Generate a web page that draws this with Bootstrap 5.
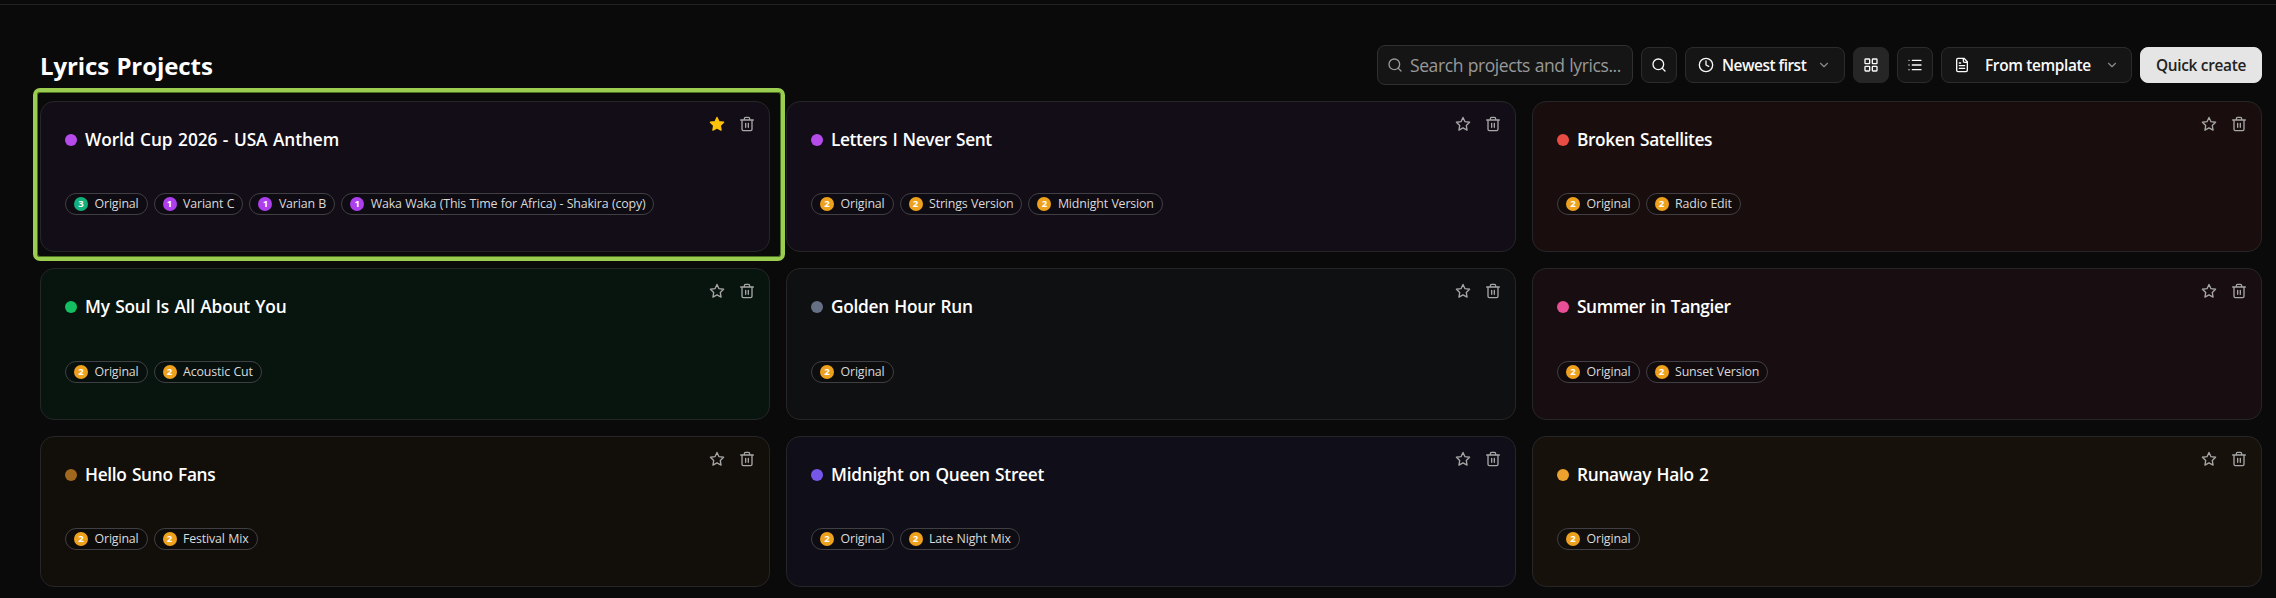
<!DOCTYPE html>
<html lang="en" data-bs-theme="dark">
<head>
<meta charset="utf-8">
<meta name="viewport" content="width=device-width, initial-scale=1">
<title>Lyrics Projects</title>
<link href="https://cdn.jsdelivr.net/npm/bootstrap@5.3.0/dist/css/bootstrap.min.css" rel="stylesheet">
<style>
  body { background: #0a0a0a; color: #fafafa; font-family: "Open Sans", "Noto Sans", sans-serif; height: 598px; overflow: hidden; }
  .topline { height: 5px; border-bottom: 1px solid #222; }
  .page { padding: 40px 14px 0 40px; }
  .toolbar-row { height: 40px; margin-bottom: 15.7px; }
  h1 { font-size: 24px; font-weight: 700; letter-spacing: -.08px; word-spacing: 1px; line-height: 32px; padding-top: 2px; }
  svg { fill: none; stroke: currentColor; stroke-width: 2; stroke-linecap: round; stroke-linejoin: round; flex: none; }
  .searchbox { width: 256px; height: 40px; background: #151515; border: 1px solid #303030; border-radius: 8px; padding-left: 9px; color: #999; font-size: 17.5px; white-space: nowrap; }
  .searchbox svg { margin-right: 7px; }
  .searchbox span { letter-spacing: -.4px; word-spacing: .5px; width: 211px; overflow: hidden; padding-top: 1px; }
  .tool { height: 36px; background: #151515; border: 1px solid #2c2c2c; border-radius: 8px; color: #fafafa; font-size: 15.4px; font-weight: 600; padding: 0; line-height: 20px; white-space: nowrap; letter-spacing: -.35px; }
  .tool span { padding-top: 1px; }
  .tool-sq { width: 36px; }
  .tool-on { background: #262626; border-color: #262626; }
  .tool-sort { width: 160px; padding: 0 13px 0 12px; letter-spacing: -.48px; }
  .tool-template { width: 191px; padding: 0 12px; }
  .tool-template span { margin-left: 15px; }
  .tool-create { width: 122px; background: #e5e5e5; border-color: #e5e5e5; color: #222; padding-top: 1px; letter-spacing: -.3px; }
  .tool .chev { color: #8a8a8a; }
  .projects { display: grid; grid-template-columns: repeat(3, 730px); grid-auto-rows: 151.5px; gap: 16px; }
  .project { background: var(--tint); border: 1px solid #262528; border-radius: 14px; padding: 25px 24px 0; position: relative; }
  .project h2 { font-size: 17.3px; font-weight: 600; line-height: 26px; letter-spacing: calc(-.36px + var(--track)); word-spacing: 1.2px; margin: 0; white-space: nowrap; }
  .dot { width: 12px; height: 12px; border-radius: 50%; background: var(--dot); margin-right: 8px; }
  .actions { position: absolute; top: 14px; right: 14px; gap: 14px; color: #a6a6a6; }
  .actions .fav { color: #fdc20c; fill: #fdc20c; }
  .chips { margin-top: 40.6px; gap: 6px; }
  .chip { height: 22px; border: 1px solid #403f43; border-radius: 11px; padding: 0 8px; font-size: 12.4px; line-height: 20px; color: #dadada; white-space: nowrap; background: #0a0a0a66; letter-spacing: -.16px; word-spacing: .4px; }
  .num { width: 14px; height: 14px; border-radius: 50%; background: #eda11c; color: #fff; font-size: 9.6px; font-weight: 700; line-height: 14px; text-align: center; margin-right: 6.5px; letter-spacing: 0; }
  .num-1 { background: #ad3fec; }
  .num-3 { background: #12b07c; }
  .highlight { position: absolute; left: -8px; top: -14.2px; width: 752px; height: 173.4px; border: 4px solid #9bcd50; border-radius: 7px; box-shadow: inset 0 0 0 1px #4c7420; pointer-events: none; }
</style>
</head>
<body>
<svg width="0" height="0" class="position-absolute">
  <symbol id="search" viewBox="0 0 24 24"><circle cx="11" cy="11" r="8"/><path d="m21 21-4.3-4.3"/></symbol>
  <symbol id="clock" viewBox="0 0 24 24"><circle cx="12" cy="12" r="10"/><path d="M12 6v6l4 2"/></symbol>
  <symbol id="chevron" viewBox="0 0 24 24"><path d="m6 9 6 6 6-6"/></symbol>
  <symbol id="grid" viewBox="0 0 24 24"><rect x="3" y="3" width="7" height="7" rx="1"/><rect x="14" y="3" width="7" height="7" rx="1"/><rect x="14" y="14" width="7" height="7" rx="1"/><rect x="3" y="14" width="7" height="7" rx="1"/></symbol>
  <symbol id="list" viewBox="0 0 24 24"><path d="M3 5h.01M3 12h.01M3 19h.01M8 5h13M8 12h13M8 19h13"/></symbol>
  <symbol id="file" viewBox="0 0 24 24"><path d="M15 2H6a2 2 0 0 0-2 2v16a2 2 0 0 0 2 2h12a2 2 0 0 0 2-2V7zM14 2v4a2 2 0 0 0 2 2h4M10 9H8M16 13H8M16 17H8"/></symbol>
  <symbol id="star" viewBox="0 0 24 24"><path d="m12 2.2 3 6.3 6.9.9-5 4.8 1.2 6.9-6.1-3.3-6.1 3.3 1.2-6.9-5-4.8 6.9-.9z"/></symbol>
  <symbol id="trash" viewBox="0 0 24 24"><path d="M2.5 6h19M19.5 6v14a2 2 0 0 1-2 2h-11a2 2 0 0 1-2-2V6M8 6V4a2 2 0 0 1 2-2h4a2 2 0 0 1 2 2v2M10 11v6M14 11v6"/></symbol>
</svg>
<div class="topline"></div>
<main class="page">
  <div class="toolbar-row d-flex align-items-center gap-2">
    <h1 class="mb-0 me-auto">Lyrics Projects</h1>
    <div class="searchbox d-flex align-items-center"><svg width="16" height="16"><use href="#search"/></svg><span>Search projects and lyrics...</span></div>
    <button class="btn tool tool-sq d-flex align-items-center justify-content-center" aria-label="Search"><svg width="16" height="16"><use href="#search"/></svg></button>
    <button class="btn tool tool-sort d-flex align-items-center"><svg width="16" height="16" class="me-2"><use href="#clock"/></svg><span>Newest first</span><svg width="14" height="14" class="chev ms-auto"><use href="#chevron"/></svg></button>
    <button class="btn tool tool-sq tool-on d-flex align-items-center justify-content-center" aria-label="Grid"><svg width="16" height="16"><use href="#grid"/></svg></button>
    <button class="btn tool tool-sq d-flex align-items-center justify-content-center" aria-label="List"><svg width="16" height="16"><use href="#list"/></svg></button>
    <button class="btn tool tool-template d-flex align-items-center"><svg width="16" height="16"><use href="#file"/></svg><span>From template</span><svg width="14" height="14" class="chev ms-auto"><use href="#chevron"/></svg></button>
    <button class="btn tool tool-create">Quick create</button>
  </div>
  <div class="projects" id="projects"></div>
</main>
<script>
  // name, dot colour, card tint, extra title tracking in px, versions, favourite
  const projects = [
    ["World Cup 2026 - USA Anthem", "#b44bea", "#130d18", .27, [[3, "Original"], [1, "Variant C"], [1, "Varian B"], [1, "Waka Waka (This Time for Africa) - Shakira (copy)"]], true],
    ["Letters I Never Sent", "#b44bea", "#130d18", -.03, [[2, "Original"], [2, "Strings Version"], [2, "Midnight Version"]]],
    ["Broken Satellites", "#e84c45", "#190e0d", -.04, [[2, "Original"], [2, "Radio Edit"]]],
    ["My Soul Is All About You", "#13bf60", "#08150f", .15, [[2, "Original"], [2, "Acoustic Cut"]]],
    ["Golden Hour Run", "#667085", "#0f1012", .08, [[2, "Original"]]],
    ["Summer in Tangier", "#e94f96", "#180d11", -.06, [[2, "Original"], [2, "Sunset Version"]]],
    ["Hello Suno Fans", "#a0671e", "#120e0a", .04, [[2, "Original"], [2, "Festival Mix"]]],
    ["Midnight on Queen Street", "#7657ea", "#100e18", .1, [[2, "Original"], [2, "Late Night Mix"]]],
    ["Runaway Halo 2", "#eda12f", "#17110c", .04, [[2, "Original"]]]
  ];
  document.getElementById("projects").innerHTML = projects.map(([name, dot, tint, track, chips, fav]) => `
    <article class="project" style="--dot:${dot};--tint:${tint};--track:${track}px">
      <div class="d-flex align-items-center"><span class="dot"></span><h2>${name}</h2></div>
      <div class="actions d-flex"><svg width="16" height="16" class="${fav ? "fav" : ""}"><use href="#star"/></svg><svg width="16" height="16"><use href="#trash"/></svg></div>
      <div class="chips d-flex">${chips.map(([n, t]) => `<span class="chip d-flex align-items-center"><span class="num num-${n}">${n}</span><span>${t}</span></span>`).join("")}</div>
      ${fav ? '<div class="highlight"></div>' : ""}
    </article>`).join("");
</script>
<script src="https://cdn.jsdelivr.net/npm/bootstrap@5.3.0/dist/js/bootstrap.bundle.min.js"></script>
</body>
</html>
